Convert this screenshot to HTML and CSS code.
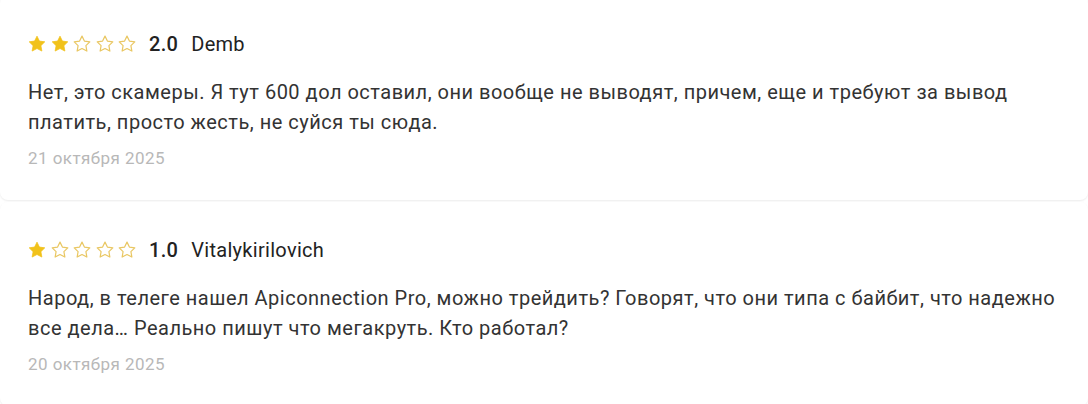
FILE: index.html
```html
<!DOCTYPE html>
<html lang="ru">
<head>
<meta charset="utf-8">
<link rel="stylesheet" href="styles.css">
</head>
<body>
<div class="reviews">
  <div class="card">
    <div class="head">
      <div class="stars">
        <svg class="star full" viewBox="0 0 24 24"><path d="M12 1.5l3.2 6.6 7.2 1-5.2 5.1 1.3 7.2L12 18l-6.5 3.4 1.3-7.2-5.2-5.1 7.2-1z"/></svg>
        <svg class="star full" viewBox="0 0 24 24"><path d="M12 1.5l3.2 6.6 7.2 1-5.2 5.1 1.3 7.2L12 18l-6.5 3.4 1.3-7.2-5.2-5.1 7.2-1z"/></svg>
        <svg class="star empty" viewBox="0 0 24 24"><path d="M12 1.5l3.2 6.6 7.2 1-5.2 5.1 1.3 7.2L12 18l-6.5 3.4 1.3-7.2-5.2-5.1 7.2-1z"/></svg>
        <svg class="star empty" viewBox="0 0 24 24"><path d="M12 1.5l3.2 6.6 7.2 1-5.2 5.1 1.3 7.2L12 18l-6.5 3.4 1.3-7.2-5.2-5.1 7.2-1z"/></svg>
        <svg class="star empty" viewBox="0 0 24 24"><path d="M12 1.5l3.2 6.6 7.2 1-5.2 5.1 1.3 7.2L12 18l-6.5 3.4 1.3-7.2-5.2-5.1 7.2-1z"/></svg>
      </div>
      <span class="score">2.0</span>
      <span class="name">Demb</span>
    </div>
    <p class="text">Нет, это скамеры. Я тут 600 дол оставил, они вообще не выводят, причем, еще и требуют за вывод платить, просто жесть, не суйся ты сюда.</p>
    <div class="date">21 октября 2025</div>
  </div>
  <div class="card">
    <div class="head">
      <div class="stars">
        <svg class="star full" viewBox="0 0 24 24"><path d="M12 1.5l3.2 6.6 7.2 1-5.2 5.1 1.3 7.2L12 18l-6.5 3.4 1.3-7.2-5.2-5.1 7.2-1z"/></svg>
        <svg class="star empty" viewBox="0 0 24 24"><path d="M12 1.5l3.2 6.6 7.2 1-5.2 5.1 1.3 7.2L12 18l-6.5 3.4 1.3-7.2-5.2-5.1 7.2-1z"/></svg>
        <svg class="star empty" viewBox="0 0 24 24"><path d="M12 1.5l3.2 6.6 7.2 1-5.2 5.1 1.3 7.2L12 18l-6.5 3.4 1.3-7.2-5.2-5.1 7.2-1z"/></svg>
        <svg class="star empty" viewBox="0 0 24 24"><path d="M12 1.5l3.2 6.6 7.2 1-5.2 5.1 1.3 7.2L12 18l-6.5 3.4 1.3-7.2-5.2-5.1 7.2-1z"/></svg>
        <svg class="star empty" viewBox="0 0 24 24"><path d="M12 1.5l3.2 6.6 7.2 1-5.2 5.1 1.3 7.2L12 18l-6.5 3.4 1.3-7.2-5.2-5.1 7.2-1z"/></svg>
      </div>
      <span class="score">1.0</span>
      <span class="name">Vitalykirilovich</span>
    </div>
    <p class="text">Народ, в телеге нашел Apiconnection Pro, можно трейдить? Говорят, что они типа с байбит, что надежно все дела… Реально пишут что мегакруть. Кто работал?</p>
    <div class="date">20 октября 2025</div>
  </div>
</div>
</body>
</html>
```

FILE: styles.css
```css
html, body {
  margin: 0;
  padding: 0;
  background: #ffffff;
}
body {
  font-family: Roboto, "Noto Sans", Arial, sans-serif;
  color: #333333;
}
.reviews {
  display: flex;
  flex-direction: column;
  gap: 2px;
  margin-top: -4px;
}
.card {
  background: #ffffff;
  border-radius: 8px;
  box-shadow: 0 1px 2px rgba(0, 0, 0, 0.08);
  padding: 36px 20px 30px 28px;
}
.head {
  display: flex;
  align-items: center;
  height: 24px;
}
.stars {
  display: flex;
  gap: 4.5px;
  margin-right: 13px;
}
.star {
  width: 18px;
  height: 18px;
  display: block;
}
.star.full path {
  fill: #f1c21b;
  stroke: #f1c21b;
  stroke-width: 1;
  stroke-linejoin: round;
}
.star.empty path {
  fill: none;
  stroke: #e9c763;
  stroke-width: 1.6;
  stroke-linejoin: round;
}
.score {
  font-size: 20px;
  font-weight: 500;
  color: #222222;
  margin-right: 13px;
  letter-spacing: 0.3px;
}
.name {
  font-size: 20px;
  color: #222222;
  letter-spacing: 0.3px;
}
.text {
  margin: 21px 0 0;
  font-size: 20px;
  line-height: 30px;
  letter-spacing: 0.5px;
  color: #333333;
}
.date {
  margin-top: 9px;
  font-size: 17px;
  line-height: 24px;
  letter-spacing: 0.45px;
  color: #b8b8b8;
}
```
